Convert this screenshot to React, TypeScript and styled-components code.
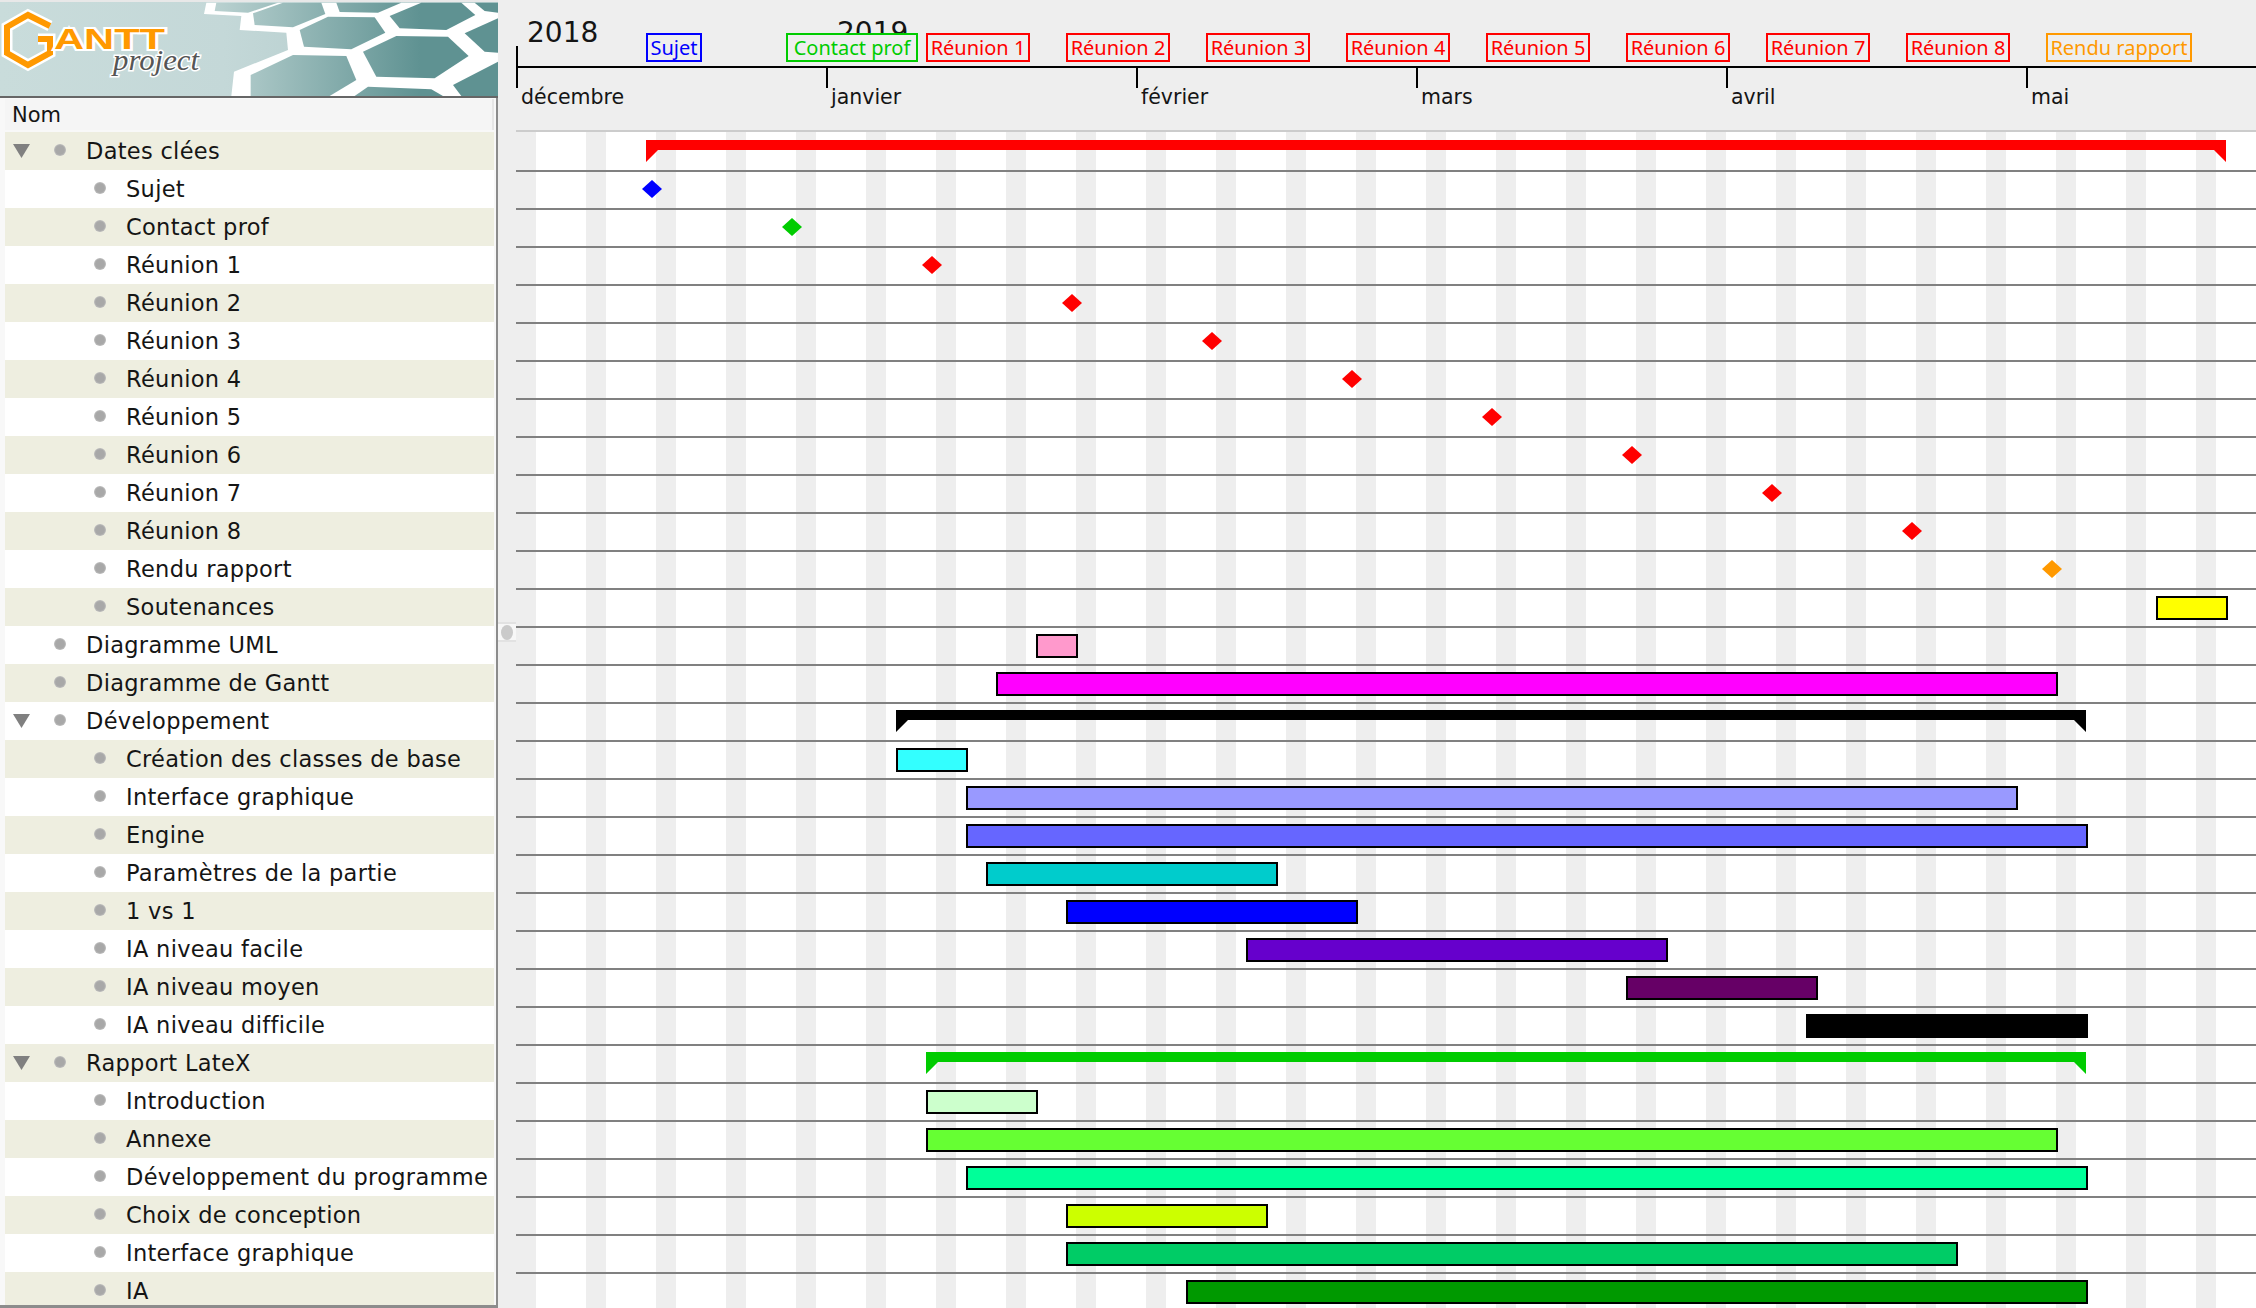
import React, { FC } from 'react';
import styled, { createGlobalStyle } from 'styled-components';

const DAY = 10;

const GlobalStyle = createGlobalStyle`
	html, body {
		margin: 0;
		padding: 0;
		background: #eeeeee;
		overflow: hidden;
	}
	* {
		box-sizing: border-box;
	}
`;

const Page = styled.div`
	width: 2256px;
	height: 1308px;
	display: flex;
	overflow: hidden;
	font-family: "DejaVu Sans", sans-serif;
	color: #151515;
`;

/* left pane */
const Pane = styled.div`
	width: 498px;
	flex: none;
	display: flex;
	flex-direction: column;
`;

const Banner = styled.div`
	height: 98px;
	flex: none;
	line-height: 0;
`;

const TreeBox = styled.div`
	flex: 1;
	min-height: 0;
	padding: 1px 2px 0 5px;
	background: #f8f8f8;
	border-right: 2px solid #8c8c8c;
	border-bottom: 3px solid #8c8c8c;
	overflow: hidden;
`;

const TreeHeader = styled.div`
	height: 31px;
	margin-bottom: 2px;
	padding-left: 7px;
	display: flex;
	align-items: center;
	background: #f5f5f5;
	border-right: 2px solid #e6e6e6;
	font-size: 21px;
`;

const TreeRow = styled.div<{ $odd: boolean }>`
	height: 38px;
	display: flex;
	align-items: center;
	background: ${p => (p.$odd ? '#eeeee0' : '#ffffff')};
	font-size: 22.5px;
	letter-spacing: 0.3px;
	white-space: nowrap;
`;

const ArrowSlot = styled.div<{ $level: number }>`
	width: ${p => (p.$level === 1 ? 49 : 89)}px;
	flex: none;
	padding-left: 8px;
`;

const Arrow = styled.div`
	width: 17px;
	height: 14px;
	background: #808080;
	clip-path: polygon(0 0, 100% 0, 50% 100%);
`;

const Dot = styled.div`
	width: 12px;
	height: 12px;
	margin: -3px 20px 0 0;
	flex: none;
	border-radius: 50%;
	background: radial-gradient(circle, #a8a8a8 0 50%, #dcdcdc 100%);
`;

/* splitter */
const Splitter = styled.div`
	width: 18px;
	flex: none;
	padding-top: 622px;
`;

const Knob = styled.div`
	height: 20px;
	display: flex;
	align-items: center;
	justify-content: center;
	background: #f7f7f7;
	border-top: 2px solid #e2e2e2;
	border-bottom: 2px solid #e2e2e2;
`;

const KnobDot = styled.div`
	width: 12px;
	height: 15px;
	border-radius: 50%;
	background: #cacaca;
`;

/* chart */
const Chart = styled.div`
	flex: 1;
	min-width: 0;
	position: relative;
	overflow: hidden;
`;

const Scale = styled.div`
	height: 130px;
`;

const YearRow = styled.div`
	height: 68px;
	display: flex;
	border-bottom: 2px solid #000;
`;

const YearCell = styled.div<{ $tick: boolean }>`
	flex: none;
	position: relative;
	padding: 13px 0 0 11px;
	font-size: 28px;
	line-height: 40px;

	${p => p.$tick && `
		&::before {
			content: '';
			position: absolute;
			left: 0;
			top: 46px;
			width: 2px;
			height: 22px;
			background: #000;
		}
	`}
`;

const MonthRow = styled.div`
	display: flex;
`;

const MonthCell = styled.div`
	flex: none;
	position: relative;
	padding: 16px 0 0 5px;
	font-size: 20.5px;
	line-height: 26px;
	white-space: nowrap;

	&::before {
		content: '';
		position: absolute;
		left: 0;
		top: 0;
		width: 2px;
		height: 20px;
		background: #000;
	}
`;

const MilestoneLabel = styled.div<{ $color: string }>`
	position: absolute;
	top: 33px;
	height: 29px;
	border: 2px solid ${p => p.$color};
	background: #eeeeee;
	color: ${p => p.$color};
	font-family: "Noto Sans", sans-serif;
	font-size: 20px;
	line-height: 26px;
	text-align: center;
	white-space: nowrap;
	overflow: hidden;
`;

const Grid = styled.div`
	background: repeating-linear-gradient(90deg, #eeeeee 0 20px, #ffffff 20px 70px);
`;

const GridRow = styled.div<{ $first: boolean }>`
	height: ${p => (p.$first ? 40 : 38)}px;
	padding-top: ${p => (p.$first ? 2 : 0)}px;
	display: flex;
	align-items: flex-start;
	border-top: 2px solid ${p => (p.$first ? '#cccccc' : '#808080')};
`;

const Bar = styled.div<{ $color: string }>`
	flex: none;
	height: 24px;
	margin-top: 6px;
	background: ${p => p.$color};
	border: 2px solid #000;
`;

const Summary = styled.div<{ $color: string }>`
	flex: none;
	height: 22px;
	margin-top: 6px;
	background: ${p => p.$color};
	clip-path: polygon(0 0, 100% 0, 100% 100%, calc(100% - 12px) 10px, 12px 10px, 0 100%);
`;

const Diamond = styled.div<{ $color: string }>`
	flex: none;
	width: 20px;
	height: 18px;
	margin-top: 8px;
	background: ${p => p.$color};
	clip-path: polygon(50% 0, 100% 50%, 50% 100%, 0 50%);
`;

type Shape =
	| { kind: 'bar'; start: number; days: number; color: string }
	| { kind: 'summary'; start: number; days: number; color: string }
	| { kind: 'milestone'; start: number; color: string; labelWidth: number };

type Task = {
	name: string
	level: number
	open?: boolean
	shape: Shape
}

const bar = (start: number, days: number, color: string): Shape => ({ kind: 'bar', start, days, color });
const summary = (start: number, days: number, color: string): Shape => ({ kind: 'summary', start, days, color });
const milestone = (start: number, color: string, labelWidth = 104): Shape => ({ kind: 'milestone', start, color, labelWidth });

const RED = '#ff0000';

const tasks: Task[] = [
	{ name: 'Dates clées', level: 1, open: true, shape: summary(13, 158, RED) },
	{ name: 'Sujet', level: 2, shape: milestone(13, '#0000ff', 56) },
	{ name: 'Contact prof', level: 2, shape: milestone(27, '#00cc00', 132) },
	{ name: 'Réunion 1', level: 2, shape: milestone(41, RED) },
	{ name: 'Réunion 2', level: 2, shape: milestone(55, RED) },
	{ name: 'Réunion 3', level: 2, shape: milestone(69, RED) },
	{ name: 'Réunion 4', level: 2, shape: milestone(83, RED) },
	{ name: 'Réunion 5', level: 2, shape: milestone(97, RED) },
	{ name: 'Réunion 6', level: 2, shape: milestone(111, RED) },
	{ name: 'Réunion 7', level: 2, shape: milestone(125, RED) },
	{ name: 'Réunion 8', level: 2, shape: milestone(139, RED) },
	{ name: 'Rendu rapport', level: 2, shape: milestone(153, '#ff9900', 146) },
	{ name: 'Soutenances', level: 2, shape: bar(164, 7, '#ffff00') },
	{ name: 'Diagramme UML', level: 1, shape: bar(52, 4, '#ff99cc') },
	{ name: 'Diagramme de Gantt', level: 1, shape: bar(48, 106, '#ff00ff') },
	{ name: 'Développement', level: 1, open: true, shape: summary(38, 119, '#000000') },
	{ name: 'Création des classes de base', level: 2, shape: bar(38, 7, '#33ffff') },
	{ name: 'Interface graphique', level: 2, shape: bar(45, 105, '#9999ff') },
	{ name: 'Engine', level: 2, shape: bar(45, 112, '#6666ff') },
	{ name: 'Paramètres de la partie', level: 2, shape: bar(47, 29, '#00cccc') },
	{ name: '1 vs 1', level: 2, shape: bar(55, 29, '#0000ff') },
	{ name: 'IA niveau facile', level: 2, shape: bar(73, 42, '#6600cc') },
	{ name: 'IA niveau moyen', level: 2, shape: bar(111, 19, '#660066') },
	{ name: 'IA niveau difficile', level: 2, shape: bar(129, 28, '#000000') },
	{ name: 'Rapport LateX', level: 1, open: true, shape: summary(41, 116, '#00cc00') },
	{ name: 'Introduction', level: 2, shape: bar(41, 11, '#ccffcc') },
	{ name: 'Annexe', level: 2, shape: bar(41, 113, '#66ff33') },
	{ name: 'Développement du programme', level: 2, shape: bar(45, 112, '#00ff99') },
	{ name: 'Choix de conception', level: 2, shape: bar(55, 20, '#ccff00') },
	{ name: 'Interface graphique', level: 2, shape: bar(55, 89, '#00cc66') },
	{ name: 'IA', level: 2, shape: bar(67, 90, '#009900') },
];

const years = [
	{ label: '2018', days: 31 },
	{ label: '2019', days: 150 },
];

const months = [
	{ label: 'décembre', days: 31 },
	{ label: 'janvier', days: 31 },
	{ label: 'février', days: 28 },
	{ label: 'mars', days: 31 },
	{ label: 'avril', days: 30 },
	{ label: 'mai', days: 31 },
];

const logoCells = [
	'55,8 240,8 150,38 50,33',
	'165,40 255,8 370,8 382,42 285,82 170,75',
	'305,90 390,50 530,52 562,98 460,148 318,140',
	'415,8 610,8 540,38 425,36',
	'575,48 670,8 790,8 832,45 745,90 605,85',
	'830,8 900,8 900,38 860,33',
	'800,100 900,55 900,158 860,155',
	'495,155 595,108 750,110 812,168 710,235 535,230',
	'158,225 285,165 445,168 475,240 395,288 158,288',
	'470,288 510,260 700,268 735,288',
	'765,255 900,185 900,288 790,288',
];

const Logo: FC = () => (
	<svg width="498" height="98" viewBox="0 0 498 98">
		<defs>
			<linearGradient id="sky" gradientUnits="userSpaceOnUse" x1="0" y1="0" x2="498" y2="0">
				<stop offset="0" stopColor="#c9dcdb" />
				<stop offset="0.45" stopColor="#c4d8d8" />
				<stop offset="1" stopColor="#a8c4c4" />
			</linearGradient>
			<linearGradient id="cell" gradientUnits="userSpaceOnUse" x1="210" y1="0" x2="420" y2="0">
				<stop offset="0" stopColor="#bcd3d2" />
				<stop offset="1" stopColor="#5f9292" />
			</linearGradient>
		</defs>
		<rect width="498" height="98" fill="#666666" />
		<rect width="498" height="2" fill="#e8e8e8" />
		<rect y="2" width="498" height="94" fill="url(#sky)" />
		<g transform="translate(198 0) scale(0.3333)">
			<polygon fill="#ffffff" points="25,8 900,8 900,288 100,288 108,215 270,150 265,98 125,90 130,48 18,42" />
			{logoCells.map(points => <polygon key={points} points={points} fill="url(#cellZoom)" />)}
			<defs>
				<linearGradient id="cellZoom" gradientUnits="userSpaceOnUse" x1="36" y1="0" x2="666" y2="0">
					<stop offset="0" stopColor="#bcd3d2" />
					<stop offset="1" stopColor="#5f9292" />
				</linearGradient>
			</defs>
		</g>
		<polyline points="50,26 28,15 7,27 7,53 28,65 50,53 50,39 38,39" fill="none" stroke="#ffffff" strokeWidth="11" />
		<polyline points="50,26 28,15 7,27 7,53 28,65 50,53 50,39 38,39" fill="none" stroke="#ff9900" strokeWidth="6" />
		<text
			x="54"
			y="49"
			textLength="111"
			lengthAdjust="spacingAndGlyphs"
			fontFamily="'Liberation Sans', sans-serif"
			fontWeight="700"
			fontSize="30"
			fill="#ff9900"
			stroke="#ffffff"
			strokeWidth="4"
			paintOrder="stroke"
		>
			ANTT
		</text>
		<text
			x="113"
			y="70"
			textLength="86"
			lengthAdjust="spacingAndGlyphs"
			fontFamily="'Liberation Serif', serif"
			fontStyle="italic"
			fontSize="29"
			fill="#555555"
			stroke="#ffffff"
			strokeWidth="3"
			paintOrder="stroke"
		>
			project
		</text>
	</svg>
);

const TaskShape: FC<{ shape: Shape }> = ({ shape }) => {
	if (shape.kind === 'milestone') {
		return <Diamond $color={shape.color} style={{ marginLeft: shape.start * DAY - 4 }} />;
	}
	if (shape.kind === 'summary') {
		return <Summary $color={shape.color} style={{ marginLeft: shape.start * DAY, width: shape.days * DAY }} />;
	}
	return <Bar $color={shape.color} style={{ marginLeft: shape.start * DAY, width: shape.days * DAY + 2 }} />;
};

const App: FC = () => {
	return (
		<Page>
			<GlobalStyle />
			<Pane>
				<Banner><Logo /></Banner>
				<TreeBox>
					<TreeHeader>Nom</TreeHeader>
					{tasks.map((task, i) => (
						<TreeRow key={i} $odd={i % 2 === 0}>
							<ArrowSlot $level={task.level}>{task.open && <Arrow />}</ArrowSlot>
							<Dot />
							{task.name}
						</TreeRow>
					))}
				</TreeBox>
			</Pane>
			<Splitter>
				<Knob><KnobDot /></Knob>
			</Splitter>
			<Chart>
				<Scale>
					<YearRow>
						{years.map((year, i) => (
							<YearCell key={year.label} $tick={i === 0} style={{ width: year.days * DAY }}>{year.label}</YearCell>
						))}
					</YearRow>
					<MonthRow>
						{months.map(month => (
							<MonthCell key={month.label} style={{ width: month.days * DAY }}>{month.label}</MonthCell>
						))}
					</MonthRow>
				</Scale>
				{tasks.map(task => (
					task.shape.kind === 'milestone' && (
						<MilestoneLabel
							key={task.name}
							$color={task.shape.color}
							style={{ left: task.shape.start * DAY, width: task.shape.labelWidth }}
						>
							{task.name}
						</MilestoneLabel>
					)
				))}
				<Grid>
					{tasks.map((task, i) => (
						<GridRow key={i} $first={i === 0}>
							<TaskShape shape={task.shape} />
						</GridRow>
					))}
				</Grid>
			</Chart>
		</Page>
	);
};

export default App;
